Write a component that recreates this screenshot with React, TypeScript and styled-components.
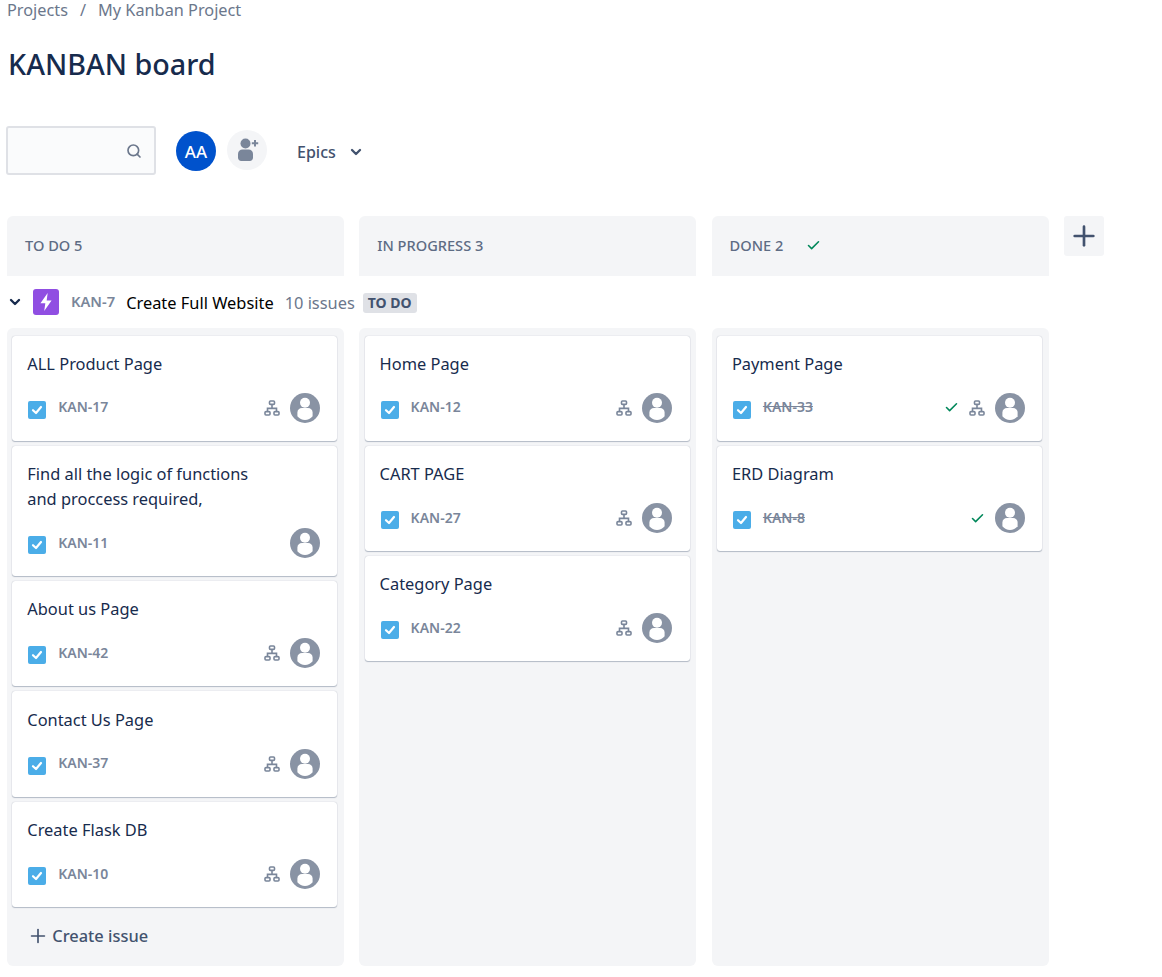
import { createGlobalStyle, styled } from "styled-components";
import { ChevronDown, Plus, Search, Check } from "lucide-react";

const GlobalStyle = createGlobalStyle`
  html, body {
    margin: 0;
    padding: 0;
    background: #fff;
    font-family: "Noto Sans", "Open Sans", sans-serif;
    color: #172b4d;
  }
`;

const Page = styled.div`
  width: 1162px;
  height: 977px;
  padding-left: 7px;
  box-sizing: border-box;
  overflow: hidden;
`;

const Breadcrumbs = styled.nav`
  display: flex;
  height: 20px;
  align-items: center;
  font-size: 16.3px;
  color: #6b778c;
  gap: 12px;
`;

const Title = styled.h1`
  margin: 23px 0 0 1px;
  height: 42px;
  font-size: 28.7px;
  line-height: 42px;
  font-weight: 500;
  color: #172b4d;
`;

const Toolbar = styled.div`
  display: flex;
  align-items: center;
  height: 50px;
  margin: 40px 0 41px -1px;
`;

const SearchBox = styled.div`
  width: 150px;
  height: 49px;
  box-sizing: border-box;
  border: 2px solid #dfe1e6;
  border-radius: 3px;
  background: #fafbfc;
  display: flex;
  align-items: center;
  justify-content: flex-end;
  padding: 2px 12px 0 0;
  color: #6b778c;
`;

const Avatar = styled.div`
  width: 40px;
  height: 40px;
  margin: 2px 0 0 20px;
  border-radius: 50%;
  background: #0052cc;
  color: #fff;
  font-size: 17px;
  font-weight: 500;
  display: flex;
  align-items: center;
  justify-content: center;
`;

const AddPerson = styled.div`
  width: 40px;
  height: 40px;
  margin-left: 11px;
  border-radius: 50%;
  background: #f4f5f7;
  display: flex;
  align-items: center;
  justify-content: center;
`;

const EpicsButton = styled.div`
  display: flex;
  align-items: center;
  margin-left: 30px;
  padding-top: 3px;
  gap: 12px;
  font-size: 16px;
  font-weight: 500;
  color: #42526e;
`;

const Row = styled.div`
  display: flex;
  gap: 15px;
`;

const ColumnHeader = styled.div`
  width: 337px;
  height: 60px;
  margin-right: 0.3px;
  box-sizing: border-box;
  background: #f4f5f7;
  border-radius: 6px 6px 0 0;
  display: flex;
  align-items: center;
  padding: 0 0 2px 18px;
  gap: 23px;
  font-size: 14.6px;
  font-weight: 500;
  color: #5e6c84;
`;

const AddColumn = styled.div`
  width: 40px;
  height: 40px;
  background: #f4f5f7;
  border-radius: 3px;
  color: #42526e;
  display: flex;
  align-items: center;
  justify-content: center;
`;

const EpicRow = styled.div`
  height: 52px;
  display: flex;
  align-items: center;
  font-size: 16.4px;
  color: #000;
`;

const Toggle = styled.span`
  display: flex;
  width: 18px;
  color: #172b4d;
`;

const EpicIcon = styled.span`
  width: 26px;
  height: 26px;
  margin-left: 8px;
  border-radius: 3px;
  background: #904ee2;
  display: flex;
  align-items: center;
  justify-content: center;
`;

const EpicKey = styled.span`
  margin: 0 0 2px 12px;
  font-size: 14.7px;
  font-weight: 600;
  color: #7a869a;
`;

const EpicName = styled.span`
  margin-left: 11px;
`;

const EpicCount = styled.span`
  margin-left: 11px;
  color: #6b778c;
`;

const Lozenge = styled.span`
  margin: 2px 0 0 8px;
  padding: 0 5px;
  height: 20px;
  line-height: 20px;
  background: #dfe1e6;
  border-radius: 3px;
  font-size: 14px;
  font-weight: 700;
  color: #42526e;
`;

const Lane = styled.div`
  width: 337px;
  height: 638px;
  margin-right: 0.3px;
  box-sizing: border-box;
  background: #f4f5f7;
  border-radius: 6px;
  padding: 7.5px 6.6px 0 5.3px;
  display: flex;
  flex-direction: column;
  gap: 5px;
`;

const Card = styled.div`
  background: #fff;
  border-radius: 3px;
  box-shadow: 0 1px 1px rgba(9, 30, 66, 0.25), 0 0 1px rgba(9, 30, 66, 0.31);
  padding: 15.33px 17.4px 18px 15px;
`;

const CardTitle = styled.div`
  font-size: 16.4px;
  line-height: 25px;
  max-width: 240px;
  color: #172b4d;
  margin-bottom: 17px;
`;

const CardFooter = styled.div`
  display: flex;
  align-items: center;
  height: 30px;
`;

const IssueKey = styled.span<{ $done?: boolean }>`
  margin: 0 0 2px 12px;
  flex: 1;
  font-size: 14px;
  font-weight: 600;
  color: #7a869a;
  text-decoration: ${(props) => (props.$done ? "line-through" : "none")};
`;

const DoneMark = styled.span`
  display: flex;
  margin-right: 10px;
  color: #00875a;
`;

const ChildIcon = styled.span`
  display: flex;
  margin-right: 10px;
`;

const CreateIssue = styled.div`
  display: flex;
  align-items: center;
  gap: 3px;
  margin: 12px 0 0 15px;
  font-size: 16.4px;
  font-weight: 500;
  color: #42526e;
`;

const CheckboxIcon = () => (
  <svg width="18" height="18" viewBox="0 0 18 18" style={{ marginLeft: 1, marginTop: 4 }}>
    <rect width="18" height="18" rx="2" fill="#4bade8" />
    <path d="M5 9.2 8 12l5-6" fill="none" stroke="#fff" strokeWidth="2.2" strokeLinecap="round" strokeLinejoin="round" />
  </svg>
);

const HierarchyIcon = () => (
  <svg width="16" height="16" viewBox="0 0 16 16" fill="none" stroke="#7a869a" strokeWidth="1.6">
    <rect x="5.5" y="1" width="5" height="3.4" rx="1" />
    <rect x="1" y="11.6" width="5" height="3.4" rx="1" />
    <rect x="10" y="11.6" width="5" height="3.4" rx="1" />
    <path d="M8 4.4v4M3.5 11.6V8.4h9v3.2" />
  </svg>
);

const UserAvatar = () => (
  <svg width="30" height="30" viewBox="0 0 30 30">
    <circle cx="15" cy="15" r="15" fill="#8993a4" />
    <circle cx="15" cy="9.8" r="5" fill="#fff" />
    <path d="M7.4 19.5c0-3 2.2-4.6 4.6-4.6h6c2.4 0 4.6 1.6 4.6 4.6v3.7c-1.8 2.4-4.7 3.8-7.6 3.8s-5.8-1.4-7.6-3.8z" fill="#fff" />
  </svg>
);

const AddPersonIcon = () => (
  <svg width="28" height="28" viewBox="0 0 28 28" fill="#7a869a" style={{ marginLeft: 2 }}>
    <circle cx="11.5" cy="7.5" r="5" />
    <path d="M4 18c0-2.8 2-4.4 4.4-4.4h6.2c2.4 0 4.4 1.6 4.4 4.4v3.6c0 2-1.4 3.4-3.2 3.4H7.2C5.4 25 4 23.6 4 21.6z" />
    <path d="M21 4v6.4M17.8 7.2h6.4" fill="none" stroke="#7a869a" strokeWidth="2" />
  </svg>
);

const IssueCard = ({ title, issueKey, done, child = true }: { title: string; issueKey: string; done?: boolean; child?: boolean }) => (
  <Card>
    <CardTitle>{title}</CardTitle>
    <CardFooter>
      <CheckboxIcon />
      <IssueKey $done={done}>{issueKey}</IssueKey>
      {done && (
        <DoneMark>
          <Check size={15} strokeWidth={2.5} />
        </DoneMark>
      )}
      {child && (
        <ChildIcon>
          <HierarchyIcon />
        </ChildIcon>
      )}
      <UserAvatar />
    </CardFooter>
  </Card>
);

export default function App() {
  return (
    <Page>
      <GlobalStyle />
      <Breadcrumbs>
        <span>Projects</span>
        <span>/</span>
        <span>My Kanban Project</span>
      </Breadcrumbs>
      <Title>KANBAN board</Title>
      <Toolbar>
        <SearchBox>
          <Search size={16} strokeWidth={2.5} />
        </SearchBox>
        <Avatar>AA</Avatar>
        <AddPerson>
          <AddPersonIcon />
        </AddPerson>
        <EpicsButton>
          Epics
          <ChevronDown size={16} strokeWidth={3.5} />
        </EpicsButton>
      </Toolbar>
      <Row>
        <ColumnHeader>TO DO 5</ColumnHeader>
        <ColumnHeader>IN PROGRESS 3</ColumnHeader>
        <ColumnHeader>
          DONE 2
          <DoneMark>
            <Check size={15} strokeWidth={2.5} />
          </DoneMark>
        </ColumnHeader>
        <AddColumn>
          <Plus size={32} strokeWidth={2} />
        </AddColumn>
      </Row>
      <EpicRow>
        <Toggle>
          <ChevronDown size={16} strokeWidth={3.5} />
        </Toggle>
        <EpicIcon>
          <svg width="18" height="20" viewBox="0 0 16 18" fill="#fff">
            <path d="M9.5 1 3 10.2h4.4L6.4 17 13 7.6H8.6z" />
          </svg>
        </EpicIcon>
        <EpicKey>KAN-7</EpicKey>
        <EpicName>Create Full Website</EpicName>
        <EpicCount>10 issues</EpicCount>
        <Lozenge>TO DO</Lozenge>
      </EpicRow>
      <Row>
        <Lane>
          <IssueCard title="ALL Product Page" issueKey="KAN-17" />
          <IssueCard title="Find all the logic of functions and proccess required," issueKey="KAN-11" child={false} />
          <IssueCard title="About us Page" issueKey="KAN-42" />
          <IssueCard title="Contact Us Page" issueKey="KAN-37" />
          <IssueCard title="Create Flask DB" issueKey="KAN-10" />
          <CreateIssue>
            <Plus size={22} strokeWidth={1.8} />
            Create issue
          </CreateIssue>
        </Lane>
        <Lane>
          <IssueCard title="Home Page" issueKey="KAN-12" />
          <IssueCard title="CART PAGE" issueKey="KAN-27" />
          <IssueCard title="Category Page" issueKey="KAN-22" />
        </Lane>
        <Lane>
          <IssueCard title="Payment Page" issueKey="KAN-33" done />
          <IssueCard title="ERD Diagram" issueKey="KAN-8" done child={false} />
        </Lane>
      </Row>
    </Page>
  );
}
